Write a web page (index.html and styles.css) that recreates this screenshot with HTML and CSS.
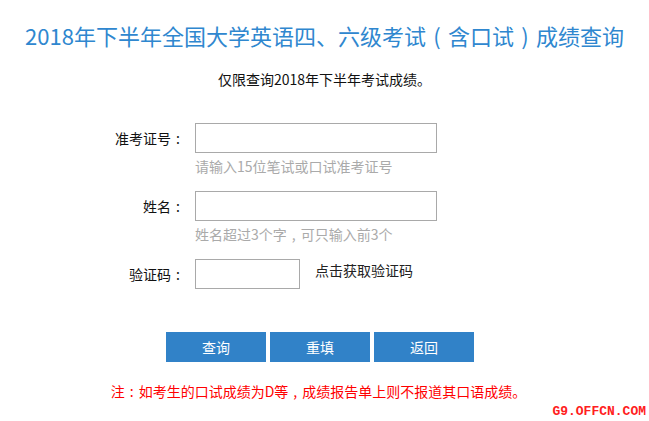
FILE: index.html
```html
<!DOCTYPE html>
<html lang="zh-CN">
<head>
  <meta charset="UTF-8" />
  <title>2018年下半年全国大学英语四、六级考试（含口试）成绩查询</title>
  <link rel="stylesheet" href="styles.css">
</head>
<body>
  <h1 class="title">2018年下半年全国大学英语四、六级考试<span class="punct">(</span>含口试<span class="punct">)</span>成绩查询</h1>
  <p class="subtitle">仅限查询2018年下半年考试成绩。</p>

  <form class="query-form">
    <div class="row">
      <label class="label">准考证号<span class="punct">:</span></label>
      <div class="field">
        <input class="input" type="text">
        <div class="hint">请输入15位笔试或口试准考证号</div>
      </div>
    </div>
    <div class="row">
      <label class="label">姓名<span class="punct">:</span></label>
      <div class="field">
        <input class="input" type="text">
        <div class="hint">姓名超过3个字<span class="punct">,</span>可只输入前3个</div>
      </div>
    </div>
    <div class="row">
      <label class="label">验证码<span class="punct">:</span></label>
      <div class="field field-inline">
        <input class="input input-code" type="text">
        <a class="code-link" href="#">点击获取验证码</a>
      </div>
    </div>

    <div class="buttons">
      <button class="btn" type="button">查询</button>
      <button class="btn" type="button">重填</button>
      <button class="btn" type="button">返回</button>
    </div>
  </form>

  <p class="note">注<span class="punct">:</span>如考生的口试成绩为D等<span class="punct">,</span>成绩报告单上则不报道其口语成绩。</p>

  <div class="watermark">G9.OFFCN.COM</div>
</body>
</html>
```

FILE: styles.css
```css
* {
  box-sizing: border-box;
  margin: 0;
  padding: 0;
}

body {
  position: relative;
  height: 421px;
  background: #ffffff;
  color: #222222;
  font-family: "Noto Sans CJK SC", "Noto Sans", sans-serif;
  font-size: 14px;
  overflow: hidden;
}

/* full-width punctuation drawn centred in its cell, as in YaHei */
.punct {
  display: inline-block;
  width: 1em;
  text-align: center;
}

.title {
  margin-top: 20px;
  text-align: center;
  font-size: 22px;
  font-weight: normal;
  line-height: 30px;
  color: #2f87cf;
}

.subtitle {
  margin-top: 19px;
  text-align: center;
  line-height: 20px;
  color: #111111;
}

.query-form {
  margin-top: 34px;
}

.row {
  display: flex;
  align-items: flex-start;
  margin-bottom: 15px;
}

.label {
  width: 185px;
  text-align: right;
  line-height: 30px;
  color: #111111;
}

.field {
  padding-left: 10px;
}

.field-inline {
  display: flex;
  align-items: flex-start;
}

.input {
  display: block;
  width: 242px;
  height: 30px;
  border: 1px solid #a9a9a9;
  background: #ffffff;
  outline: none;
}

.input-code {
  width: 105px;
}

.hint {
  line-height: 20px;
  margin-top: 3px;
  color: #aaaaaa;
}

.code-link {
  margin-left: 15px;
  line-height: 22px;
  color: #222222;
  text-decoration: none;
}

.buttons {
  display: flex;
  justify-content: center;
  gap: 4px;
  margin-top: 43px;
  padding-right: 9px;
}

.btn {
  width: 100px;
  height: 30px;
  border: none;
  background: #3182c8;
  color: #ffffff;
  font-family: inherit;
  font-size: 14px;
}

.note {
  margin-top: 19px;
  text-align: center;
  padding-right: 12px;
  line-height: 20px;
  color: #ff0000;
}

.watermark {
  position: absolute;
  right: 3px;
  bottom: 2px;
  font-family: "Liberation Mono", monospace;
  font-weight: bold;
  font-size: 13px;
  line-height: 14px;
  color: #ff2020;
}
```
